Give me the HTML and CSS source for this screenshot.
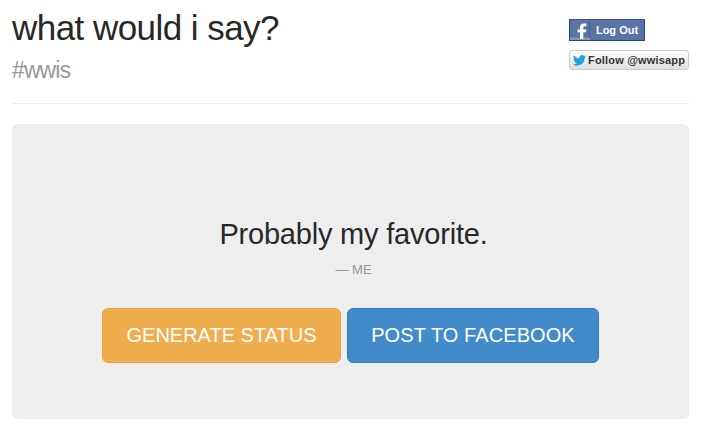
FILE: index.html
```
<!DOCTYPE html>
<html lang="en">
<head>
    <meta charset="UTF-8">
    <meta name="viewport" content="width=device-width, initial-scale=1.0">
    <title>what would i say?</title>
    <link rel="stylesheet" href="styles.css">
</head>
<body>

    <div class="container">
        <div class="page-header">
            <div class="title">
                <h1>what would i say?</h1>
                <p class="hashtag">#wwis</p>
            </div>
            <div class="social">
                <a href="#" class="fb-btn">
                    <span class="fb-icon">
                        <svg width="20" height="20" viewBox="0 0 20 20">
                            <path d="M0 17.500h20V20H0z" fill="#8296bf"/>
                            <path d="M10 19V12.200H7.600V9.400H10V7.600c0-2.700 1.500-4 4-4H16.400v2.700h-1.400c-1.200 0-1.700.5-1.700 1.600v1.500H16.400l-.4 2.800h-2.700V19z" fill="#fff"/>
                        </svg>
                    </span>
                    <span class="fb-label">Log Out</span>
                </a>
                <a href="#" class="follow-btn">
                    <svg width="13" height="11" viewBox="0 0 24 20">
                        <path d="M24 2.400a9.800 9.800 0 0 1-2.800.8A4.900 4.900 0 0 0 23.300.400a9.900 9.900 0 0 1-3.100 1.200 4.900 4.900 0 0 0-8.400 4.500A14 14 0 0 1 1.700.900a4.900 4.900 0 0 0 1.500 6.600A4.900 4.900 0 0 1 1 6.900a4.900 4.900 0 0 0 3.900 4.900 4.900 4.900 0 0 1-2.200.1 4.900 4.900 0 0 0 4.600 3.400A9.900 9.900 0 0 1 0 17.300 14 14 0 0 0 21.500 4.900 10 10 0 0 0 24 2.400z" fill="#1fa1dc"/>
                    </svg>
                    <span>Follow @wwisapp</span>
                </a>
            </div>
        </div>

        <div class="jumbotron">
            <h2 class="status">Probably my favorite.</h2>
            <small class="author">— ME</small>
            <div class="buttons">
                <a href="#" class="btn btn-warning"><span>GENERATE STATUS</span></a>
                <a href="#" class="btn btn-primary"><span>POST TO FACEBOOK</span></a>
            </div>
        </div>
    </div>

</body>
</html>
```
FILE: styles.css
```
* {
    box-sizing: border-box;
}

body {
    margin: 0;
    font-family: "Liberation Sans", Arial, sans-serif;
    color: #282828;
    background: #fff;
}

a {
    text-decoration: none;
}

.container {
    width: 677px;
    margin-left: 12px;
}

.page-header {
    display: flex;
    justify-content: space-between;
    height: 104px;
    border-bottom: 1px solid #eee;
}

.title h1 {
    margin: 8px 0 0;
    font-size: 35px;
    line-height: 40px;
    font-weight: normal;
    letter-spacing: -0.55px;
}

.hashtag {
    margin: 9px 0 0;
    font-size: 23px;
    line-height: 26px;
    letter-spacing: -0.9px;
    color: #999;
}

.social {
    width: 120px;
    padding-top: 19px;
}

/* facebook button */
.fb-btn {
    display: flex;
    width: 76px;
    height: 22px;
    border: 1px solid #29447e;
    background: #5b74a8;
    border-top-color: #3b5998;
    color: #fff;
}

.fb-icon {
    width: 20px;
    height: 20px;
    border-right: 1px solid #435f9a;
}

.fb-icon svg {
    display: block;
}

.fb-label {
    flex: 1;
    font-size: 11px;
    line-height: 20px;
    font-weight: bold;
    text-align: center;
}

/* twitter button */
.follow-btn {
    display: flex;
    align-items: center;
    gap: 2px;
    height: 20px;
    margin-top: 9px;
    padding-left: 3px;
    border: 1px solid #ccc;
    border-radius: 3px;
    background: linear-gradient(#fff, #dedede);
    color: #333;
    font-size: 11px;
    font-weight: bold;
    letter-spacing: 0.18px;
    white-space: nowrap;
}

.jumbotron {
    height: 295px;
    margin-top: 20px;
    padding-top: 92px;
    border-radius: 6px;
    background: #eee;
    text-align: center;
}

.status {
    margin: 0;
    padding-left: 6px;
    font-size: 29px;
    line-height: 36px;
    font-weight: normal;
    letter-spacing: -0.2px;
}

.author {
    display: block;
    margin-top: 10px;
    padding-left: 6px;
    font-size: 13px;
    line-height: 16px;
    color: #999;
}

.buttons {
    display: flex;
    justify-content: center;
    gap: 6px;
    margin-top: 30px;
}

.btn {
    height: 55px;
    border: 1px solid;
    border-radius: 6px;
    color: #fff;
    font-size: 20px;
    line-height: 53px;
}

.btn-warning {
    width: 239px;
    background: #f0ad4e;
    border-color: #eea236;
}

.btn-primary {
    width: 252px;
    background: #428bca;
    border-color: #357ebd;
    letter-spacing: 0.08px;
}
```
